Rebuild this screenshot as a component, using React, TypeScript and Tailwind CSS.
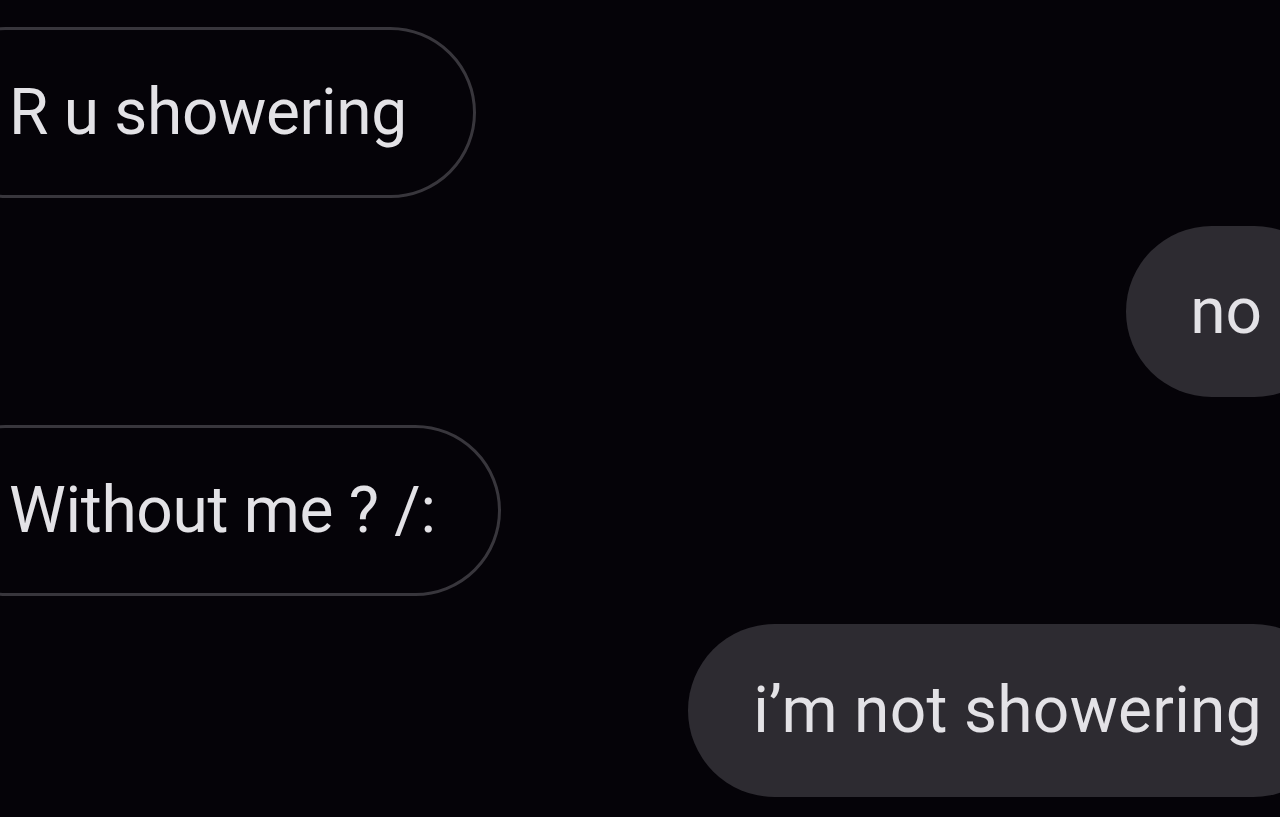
import React from "react";

export default function App() {
  const font = { fontFamily: "Roboto, 'Noto Sans', sans-serif" };
  return (
    <div
      className="w-[1280px] h-[817px] bg-[#050308] overflow-hidden flex flex-col pt-[27px] gap-[28px]"
      style={font}
    >
      <div className="self-start ml-[-80px] h-[171px] flex items-center pl-[86px] pr-[66px] rounded-full border-[3px] border-[#38363c]">
        <span className="text-[64px] leading-none text-[#e3e2e6] tracking-[-0.3px]">R u showering</span>
      </div>
      <div className="self-end mr-[-60px] h-[171px] flex items-center pl-[64px] pr-[78px] rounded-full bg-[#2d2b31]">
        <span className="text-[64px] leading-none text-[#e3e2e6]">no</span>
      </div>
      <div className="self-start ml-[-80px] h-[171px] flex items-center pl-[86px] pr-[62px] rounded-full border-[3px] border-[#38363c]">
        <span className="text-[64px] leading-none text-[#e3e2e6] tracking-[-0.3px]">Without me ? /:</span>
      </div>
      <div className="self-end mr-[-60px] h-[173px] flex items-center pl-[65px] pr-[78px] rounded-full bg-[#2d2b31]">
        <span className="text-[64px] leading-none text-[#e3e2e6] tracking-[0.3px]">i’m not showering</span>
      </div>
    </div>
  );
}
